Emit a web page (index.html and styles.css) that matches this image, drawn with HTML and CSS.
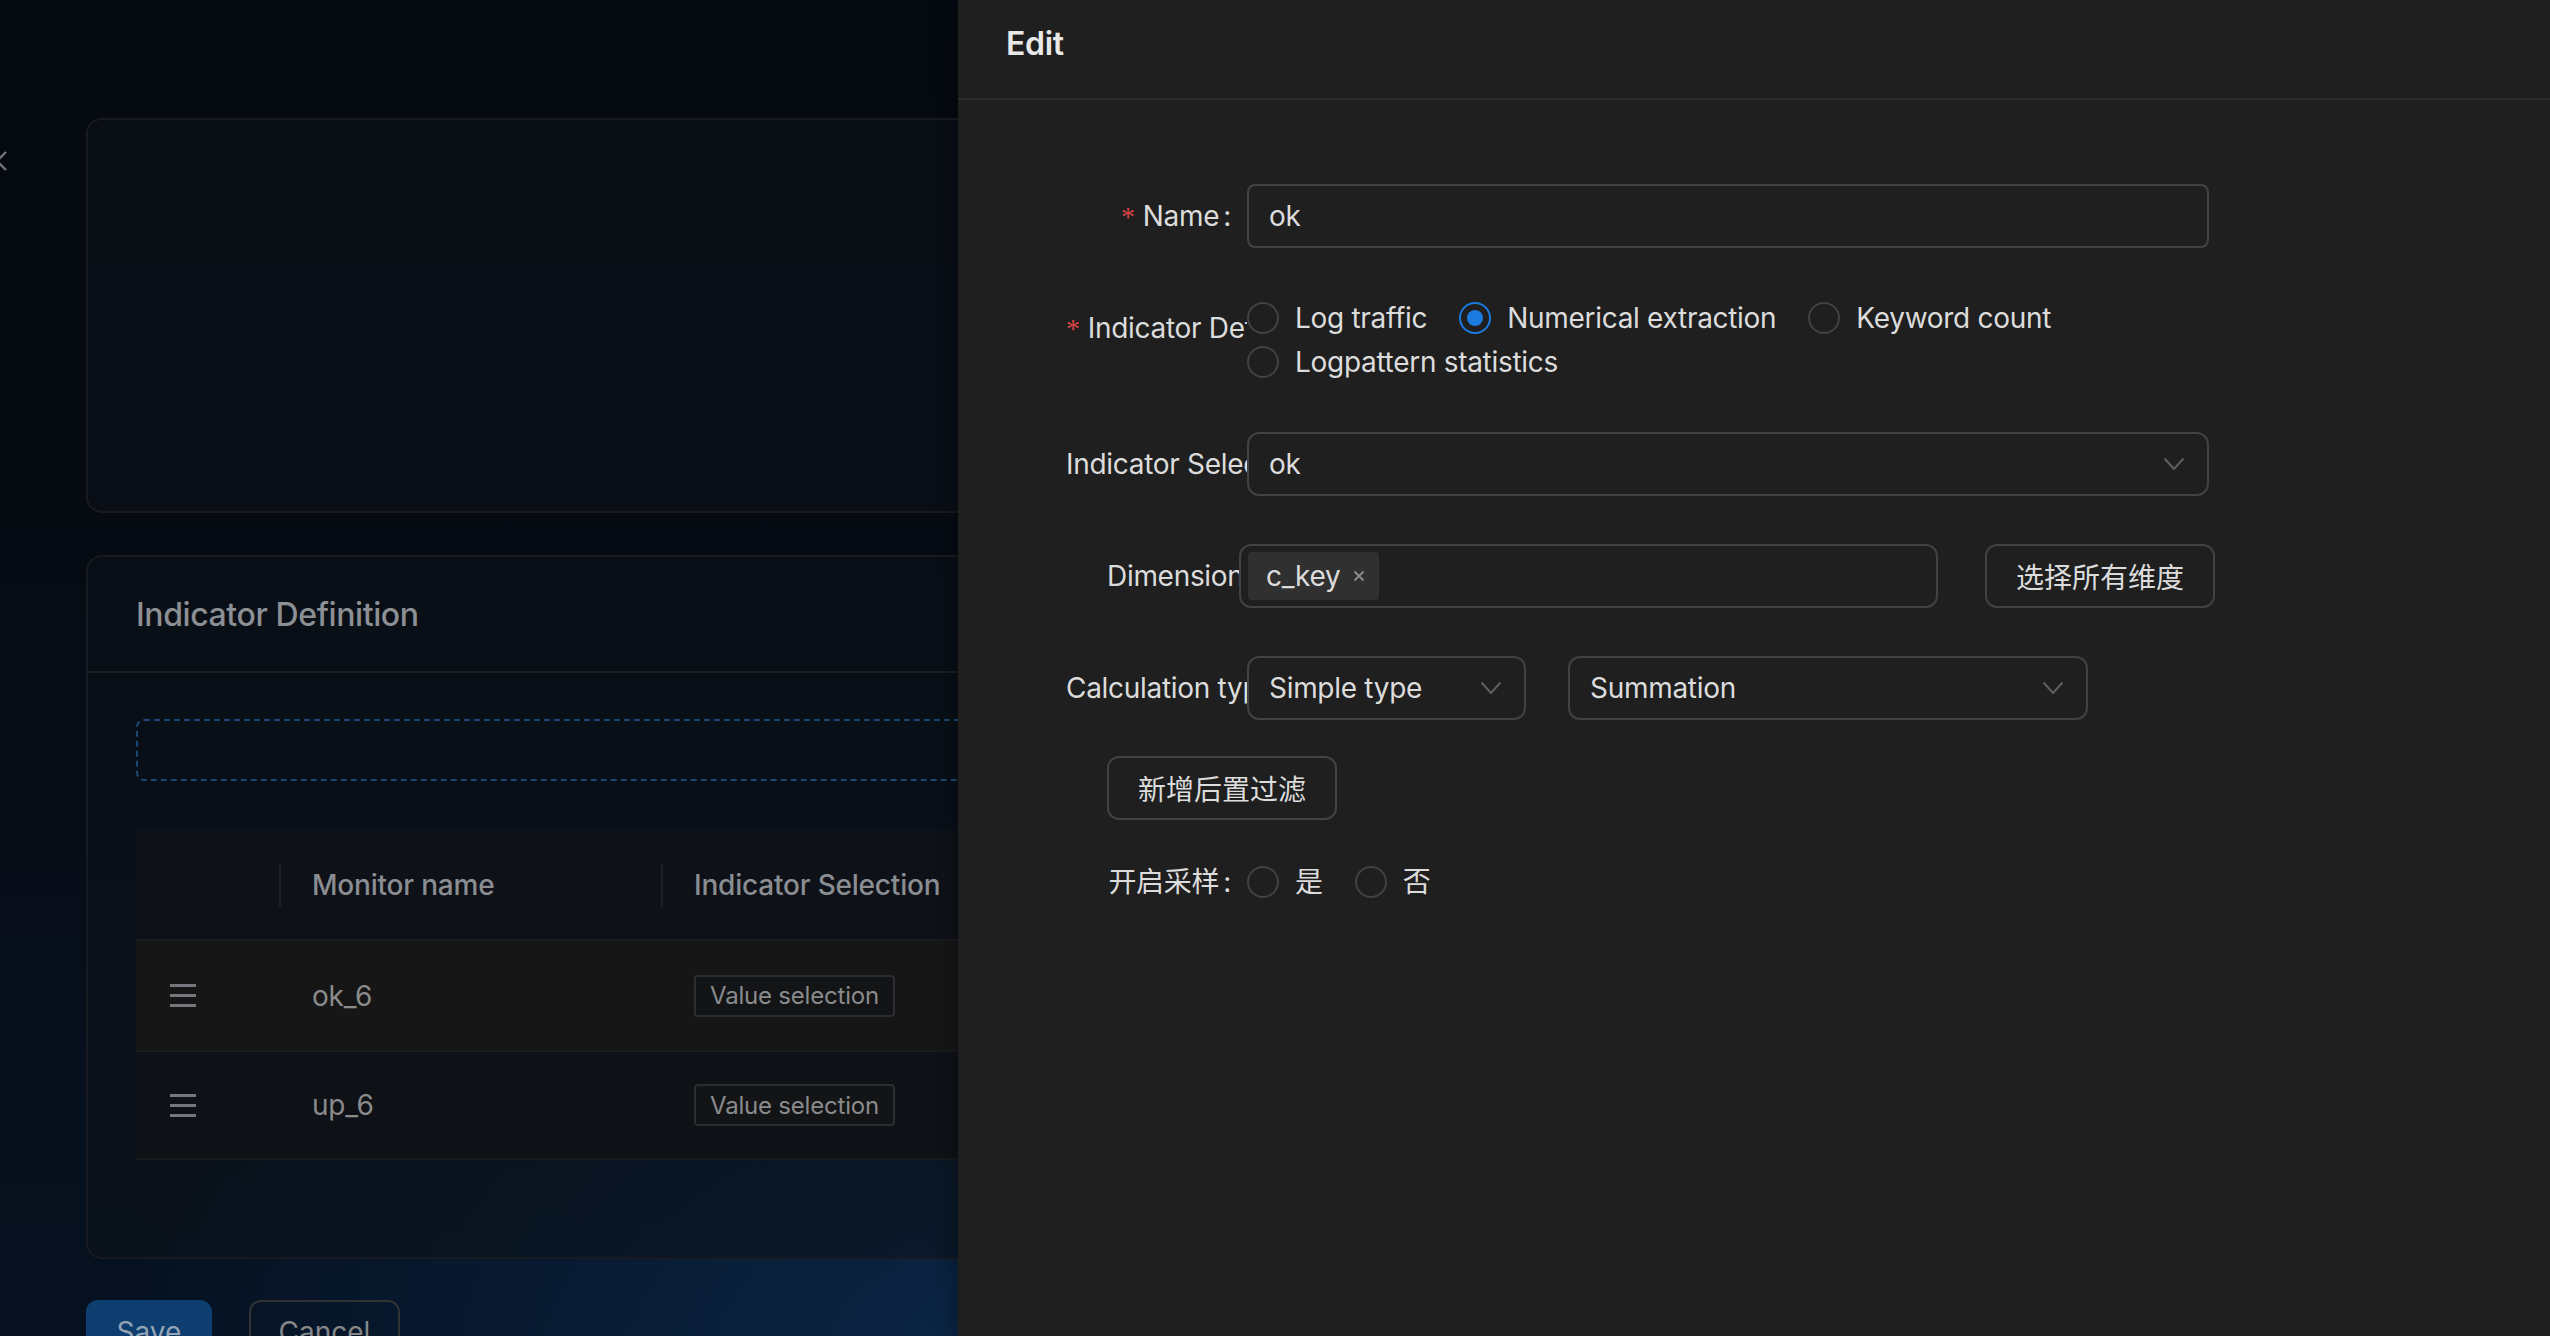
FILE: index.html
```html
<!DOCTYPE html>
<html lang="en">
<head>
<meta charset="utf-8">
<title>Edit</title>
<link rel="stylesheet" href="styles.css">
</head>
<body>
<div class="page">
  <span class="edge-toggle"><svg width="14" height="22" viewBox="0 0 14 22"><path d="M12 2 L3 11 L12 20" fill="none" stroke="#6f7378" stroke-width="2.4"/></svg></span>
  <main class="content">
    <section class="card card-top"></section>
    <section class="card card-def">
      <div class="card-head">Indicator Definition</div>
      <div class="card-body">
        <div class="dropzone"></div>
        <div class="table">
          <div class="tr th">
            <div class="td c1"></div>
            <div class="td c2 sep">Monitor name</div>
            <div class="td c3 sep">Indicator Selection</div>
          </div>
          <div class="tr row hover">
            <div class="td c1"><span class="grip"><i></i><i></i><i></i></span></div>
            <div class="td c2">ok_6</div>
            <div class="td c3"><span class="vtag">Value selection</span></div>
          </div>
          <div class="tr row">
            <div class="td c1"><span class="grip"><i></i><i></i><i></i></span></div>
            <div class="td c2">up_6</div>
            <div class="td c3"><span class="vtag">Value selection</span></div>
          </div>
        </div>
      </div>
    </section>
    <div class="actions">
      <button class="btn-save">Save</button>
      <button class="btn-cancel">Cancel</button>
    </div>
  </main>
</div>

<aside class="drawer">
  <header class="drawer-head"><h2>Edit</h2></header>
  <div class="drawer-body">
    <div class="item item-name">
      <div class="lbl"><span class="req">*</span><span class="colon">Name</span></div>
      <div class="ctl"><div class="input">ok</div></div>
    </div>

    <div class="item item-def">
      <div class="lbl"><span class="req">*</span><span class="colon">Indicator Definition</span></div>
      <div class="ctl radios">
        <span class="ropt"><span class="radio"></span><span class="rtxt">Log traffic</span></span>
        <span class="ropt"><span class="radio on"></span><span class="rtxt">Numerical extraction</span></span>
        <span class="ropt"><span class="radio"></span><span class="rtxt">Keyword count</span></span>
        <span class="ropt"><span class="radio"></span><span class="rtxt">Logpattern statistics</span></span>
      </div>
    </div>

    <div class="item item-sel">
      <div class="lbl"><span class="colon">Indicator Selection</span></div>
      <div class="ctl"><div class="select wide"><span>ok</span><svg class="chev" width="22" height="14" viewBox="0 0 22 14"><path d="M1.5 1.5 L11 12 L20.5 1.5" fill="none" stroke="#5f5f5f" stroke-width="2"/></svg></div></div>
    </div>

    <div class="item item-dim">
      <div class="lbl lbl-dim"><span class="colon">Dimensions</span></div>
      <div class="ctl dim-ctl">
        <div class="multi"><span class="tag">c_key<svg width="12" height="12" viewBox="0 0 12 12"><path d="M1.5 1.5 L10.5 10.5 M10.5 1.5 L1.5 10.5" stroke="#8c8c8c" stroke-width="1.8"/></svg></span></div>
        <button class="btn">选择所有维度</button>
      </div>
    </div>

    <div class="item item-calc">
      <div class="lbl"><span class="colon">Calculation type</span></div>
      <div class="ctl calc-ctl">
        <div class="select simple"><span>Simple type</span><svg class="chev" width="22" height="14" viewBox="0 0 22 14"><path d="M1.5 1.5 L11 12 L20.5 1.5" fill="none" stroke="#5f5f5f" stroke-width="2"/></svg></div>
        <div class="select summ"><span>Summation</span><svg class="chev" width="22" height="14" viewBox="0 0 22 14"><path d="M1.5 1.5 L11 12 L20.5 1.5" fill="none" stroke="#5f5f5f" stroke-width="2"/></svg></div>
      </div>
    </div>

    <div class="item item-filter">
      <button class="btn btn-filter">新增后置过滤</button>
    </div>

    <div class="item item-sample">
      <div class="lbl lbl-sample"><span class="colon">开启采样</span></div>
      <div class="ctl radios">
        <span class="ropt"><span class="radio"></span><span class="rtxt">是</span></span>
        <span class="ropt"><span class="radio"></span><span class="rtxt">否</span></span>
      </div>
    </div>
  </div>
</aside>
</body>
</html>
```

FILE: styles.css
```css
* { box-sizing: border-box; }
html, body { margin: 0; padding: 0; }
body {
  width: 2550px;
  height: 1336px;
  overflow: hidden;
  font-family: "Inter", "Noto Sans CJK SC", sans-serif;
  font-size: 28px;
  color: #dcdcdc;
  background: #05090f;
}

/* ---------- left page (under mask) ---------- */
.page {
  position: relative;
  width: 2550px;
  height: 1336px;
  background:
    radial-gradient(ellipse 900px 520px at 1000px 1336px, rgba(12, 44, 82, 0.75), rgba(12, 44, 82, 0) 100%),
    linear-gradient(180deg, #050a11 0%, #060b13 40%, #061120 100%);
}
.edge-toggle {
  position: absolute;
  left: -6px;
  top: 150px;
  width: 14px;
  height: 22px;
  display: block;
}
.edge-toggle svg { display: block; }

.content {
  padding: 118px 0 0 86px;
  display: flex;
  flex-direction: column;
}
.card {
  width: 2378px;
  border: 2px solid #171b21;
  border-radius: 16px;
  background: rgba(12, 18, 26, 0.55);
}
.card-top { height: 395px; margin-bottom: 42px; }
.card-def { height: 704px; display: flex; flex-direction: column; }
.card-head {
  height: 116px;
  border-bottom: 2px solid #1b1e23;
  padding: 0 48px;
  display: flex;
  align-items: center;
  font-size: 32px;
  font-weight: 500;
  letter-spacing: -0.4px;
  color: #8c8f93;
}
.card-body { padding: 46px 48px 0 48px; }
.dropzone {
  height: 62px;
  border: 2px dashed #1a4774;
  border-radius: 8px;
}
.table { margin-top: 49px; letter-spacing: -0.2px; }
.tr { display: flex; align-items: center; }
.th {
  height: 109px;
  background: #0e1117;
  font-weight: 500;
  color: #8a8d91;
}
.row { height: 111px; border-top: 2px solid #191b1e; color: #8a8b8c; }
.row:last-child { height: 110px; border-bottom: 2px solid #191b1e; background: #0e1116; }
.row.hover { background: #161616; }
.td { padding-left: 33px; display: flex; align-items: center; height: 100%; position: relative; }
.c1 { width: 143px; padding-left: 34px; }
.c2 { width: 382px; }
.c3 { flex: 1; }
.sep::before {
  content: "";
  position: absolute;
  left: 0;
  top: 50%;
  width: 2px;
  height: 44px;
  margin-top: -22px;
  background: #1c2026;
}
.grip { display: flex; flex-direction: column; gap: 7px; width: 26px; }
.grip i { display: block; height: 3px; background: #74777b; }
.vtag {
  display: inline-flex;
  align-items: center;
  height: 42px;
  padding: 0 14px;
  font-size: 24px;
  border: 2px solid #2b2d30;
  border-radius: 4px;
  background: #131416;
  color: #8a8b8c;
}
.actions { display: flex; gap: 37px; margin-top: 41px; }
.actions button {
  height: 64px;
  border-radius: 12px;
  font-family: inherit;
  font-size: 28px;
  padding: 0;
}
.btn-save { width: 126px; background: #0d3e6f; border: 2px solid #0d3e6f; color: #95a4b3; }
.btn-cancel { width: 151px; background: transparent; border: 2px solid #303236; color: #858789; }

/* ---------- drawer ---------- */
.drawer {
  position: absolute;
  top: 0;
  left: 958px;
  width: 1592px;
  height: 1336px;
  background: #1f1f1f;
  box-shadow: -6px 0 16px rgba(0, 0, 0, 0.25);
  letter-spacing: -0.3px;
}
.drawer-head {
  height: 100px;
  border-bottom: 2px solid #2c2c2c;
  padding: 0 48px;
  display: flex;
  align-items: center;
}
.drawer-head h2 {
  margin: 0;
  font-size: 32px;
  font-weight: 600;
  color: #e8e8e8;
  line-height: 1;
  padding-bottom: 10px;
}
.drawer-body { padding: 84px 0 0 108px; }

.item { display: flex; align-items: flex-start; margin-bottom: 48px; }
.lbl {
  width: 181px;
  flex: none;
  height: 64px;
  line-height: 64px;
  overflow: hidden;
  white-space: nowrap;
  text-align: right;
  color: #dcdcdc;
}
.req {
  color: #dc4446;
  font-family: "Liberation Serif", serif;
  font-size: 28px;
  margin-right: 8px;
}
.colon::after { content: ":"; margin: 0 16px 0 4px; }
.ctl { width: 962px; }

.input, .select {
  height: 64px;
  border: 2px solid #424242;
  border-radius: 8px;
  padding: 0 20px;
  display: flex;
  align-items: center;
  color: #dcdcdc;
  background: transparent;
}
.select { border-radius: 12px; justify-content: space-between; padding-right: 22px; }
.chev { display: block; }

.item-def { margin-bottom: 48px; }
.radios { display: flex; flex-wrap: wrap; line-height: 44px; }
.ropt { display: inline-flex; align-items: center; margin-right: 16px; height: 44px; }
.radio {
  width: 32px;
  height: 32px;
  border-radius: 50%;
  border: 2px solid #424242;
  flex: none;
  position: relative;
}
.radio.on { border-color: #1b7ae0; }
.radio.on::after {
  content: "";
  position: absolute;
  left: 6px;
  top: 6px;
  width: 16px;
  height: 16px;
  border-radius: 50%;
  background: #1b7ae0;
}
.rtxt { padding: 0 16px; color: #dcdcdc; white-space: nowrap; }

.item-dim { padding-left: 41px; }
.lbl-dim { width: 132px; }
.dim-ctl { display: flex; gap: 47px; width: auto; }
.multi {
  width: 699px;
  height: 64px;
  border: 2px solid #424242;
  border-radius: 12px;
  padding: 0 7px;
  display: flex;
  align-items: center;
}
.tag {
  height: 48px;
  width: 131px;
  background: #303030;
  border-radius: 4px;
  display: inline-flex;
  align-items: center;
  justify-content: space-between;
  padding: 0 14px 0 18px;
  color: #dcdcdc;
}
.btn {
  height: 64px;
  width: 230px;
  border: 2px solid #424242;
  border-radius: 12px;
  background: transparent;
  color: #dcdcdc;
  font-family: "Inter", "Noto Sans CJK SC", sans-serif;
  font-size: 28px;
  padding: 0;
}

.calc-ctl { display: flex; gap: 42px; width: auto; }
.simple { width: 279px; }
.summ { width: 520px; }

.item-calc { margin-bottom: 36px; }
.item-filter { padding-left: 41px; margin-bottom: 30px; }
.item-sample { padding-left: 41px; }
.lbl-sample { width: 140px; }
.item-sample .radios { padding-top: 10px; }
.item-sample .ropt { margin-right: 16px; }
```
